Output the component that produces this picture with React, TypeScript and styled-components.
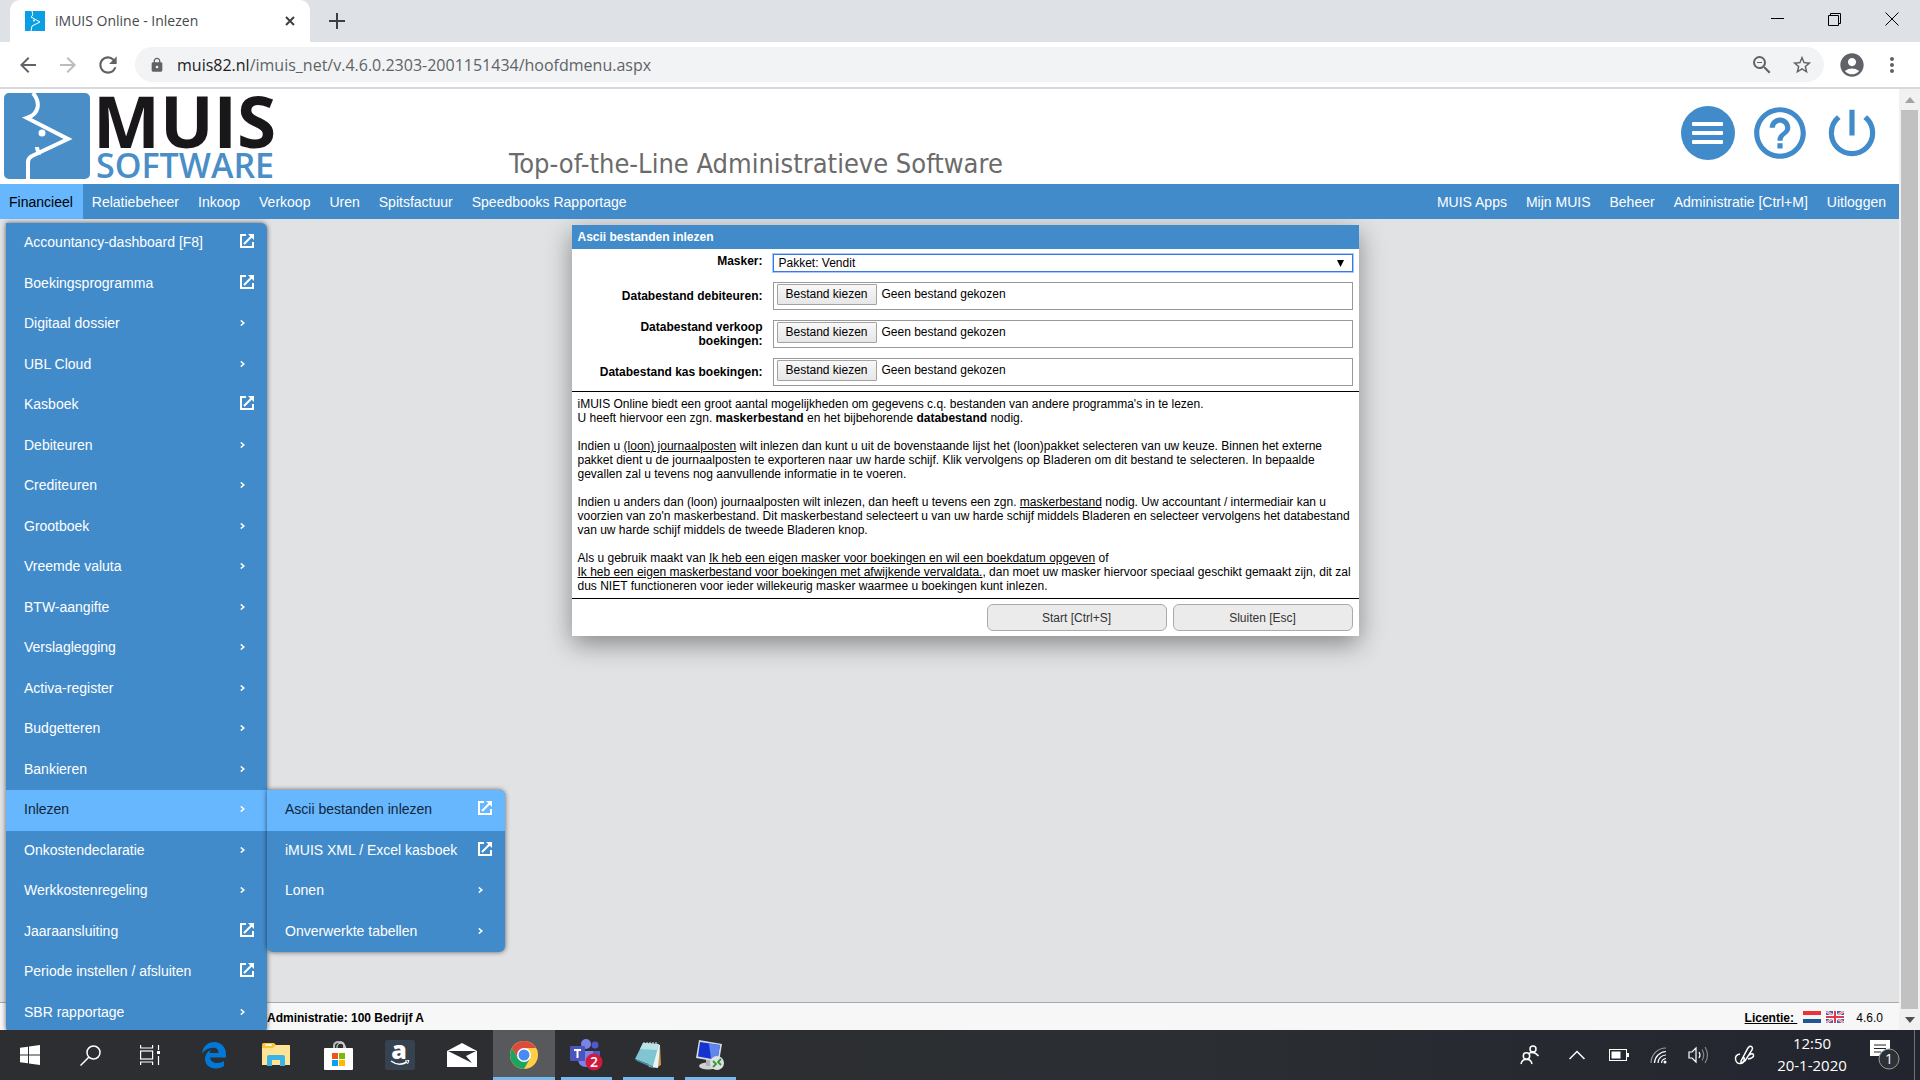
import React, { useRef, useState } from "react";
import styled, { createGlobalStyle, css } from "styled-components";
import {
  MdAccountCircle,
  MdArrowBack,
  MdArrowForward,
  MdHelpOutline,
  MdLock,
  MdMoreVert,
  MdPowerSettingsNew,
  MdRefresh,
  MdStarBorder,
  MdZoomOut,
} from "react-icons/md";

const blue = "#428bca";
const lightBlue = "#67b7ff";
const grey = "#5f6368";
const arial = `"Liberation Sans", Arial, sans-serif`;
const segoe = `"Open Sans", "Segoe UI", sans-serif`;

const Global = createGlobalStyle`
  *, *::before, *::after { box-sizing: border-box; }
  body { margin: 0; font: 12px/14px ${arial}; color: #000; overflow: hidden; }
  button, input, select { font: inherit; color: inherit; }
  a { color: inherit; text-decoration: none; }
  ul { list-style: none; margin: 0; padding: 0; }
  p { margin: 0; }
  svg { display: block; flex: none; }
`;

const Screen = styled.div`
  display: flex;
  flex-direction: column;
  height: 100vh;
  overflow: hidden;
`;

const PlainButton = styled.button`
  display: flex;
  align-items: center;
  justify-content: center;
  padding: 0;
  border: 0;
  background: none;
  cursor: pointer;
`;

/* ---------- browser window ---------- */

const TabStrip = styled.div`
  display: flex;
  flex: none;
  height: 42px;
  padding-left: 10px;
  background: #dee1e6;
`;

const Tab = styled.div`
  display: flex;
  align-items: center;
  width: 300px;
  padding: 0 14px 0 15px;
  border-radius: 10px 10px 0 0;
  background: #fff;
  color: #45494d;
  font: 14px/20px ${segoe};
`;

const TabTitle = styled.span`
  flex: 1;
  margin-left: 10px;
`;

const NewTab = styled(PlainButton)`
  width: 54px;
`;

const WindowButtons = styled.div`
  display: flex;
  margin-left: auto;
  button { width: 57px; height: 38px; }
`;

const Toolbar = styled.div`
  display: flex;
  flex: none;
  align-items: center;
  height: 47px;
  padding: 0 8px;
  border-bottom: 2px solid #d8d9de;
  background: #fff;
  color: ${grey};
`;

const ToolButton = styled(PlainButton)<{ $faded?: boolean }>`
  width: 40px;
  height: 34px;
  color: ${(p) => (p.$faded ? "#babcbe" : grey)};
`;

const Omnibox = styled.div`
  display: flex;
  flex: 1;
  align-items: center;
  height: 35px;
  margin: 0 8px 0 7px;
  padding: 0 2px 0 14px;
  border-radius: 18px;
  background: #f1f3f4;
  font: 16px/22px ${segoe};
`;

const Url = styled.span`
  flex: 1;
  margin-left: 12px;
  b { color: #202124; font-weight: 400; }
`;

const Viewport = styled.div`
  display: flex;
  flex: 1;
  min-height: 0;
  overflow: hidden;
`;

const ScrollBar = styled.div`
  display: flex;
  flex: none;
  flex-direction: column;
  width: 21px;
  background: #f1f1f1;
`;

const ScrollButton = styled(PlainButton)`
  height: 21px;
`;

const Thumb = styled.div`
  flex: 1;
  margin: 0 2px;
  background: #c1c1c1;
`;

/* ---------- application ---------- */

const Page = styled.div`
  display: flex;
  flex: 1;
  flex-direction: column;
  min-width: 0;
  background: #e1e2e4;
`;

const Header = styled.header`
  display: flex;
  flex: none;
  height: 95px;
  padding: 4px 16px 0 4px;
  background: #fff;
`;

const Wordmark = styled.div`
  display: flex;
  flex-direction: column;
  width: 187px;
  padding-left: 3px;
  font-family: ${segoe};
`;

const WordTop = styled.span`
  color: #1a171b;
  font-size: 71px;
  font-weight: 700;
  line-height: 56px;
`;

const WordBottom = styled.span`
  padding-left: 3px;
  color: #4a8ec8;
  font-size: 34px;
  font-weight: 600;
  line-height: 32px;
`;

const Slogan = styled.h1`
  align-self: flex-end;
  margin: 0 0 4px 232px;
  color: #6b6b6b;
  font: 400 27px/32px "DejaVu Sans Condensed", "Noto Sans", sans-serif;
`;

const HeaderButtons = styled.div`
  display: flex;
  gap: 10px;
  height: 80px;
  margin-left: auto;
  color: ${blue};
  button { width: 62px; color: inherit; }
`;

const NavBar = styled.nav`
  position: relative;
  z-index: 2;
  display: flex;
  flex: none;
  justify-content: space-between;
  padding-right: 3px;
  background: ${blue};
  color: #fff;
  font-size: 14px;
`;

const NavList = styled.ul`
  display: flex;
`;

const NavLink = styled.a<{ $active?: boolean }>`
  display: block;
  padding: 2px 10px 0 9px;
  line-height: 33px;
  ${(p) => p.$active && css`background: ${lightBlue}; color: #000;`}
`;

const Menu = styled.ul<{ $sub?: boolean }>`
  position: absolute;
  top: ${(p) => (p.$sub ? "0" : "39px")};
  left: ${(p) => (p.$sub ? "100%" : "6px")};
  display: grid;
  grid-auto-rows: 41px 40px;
  width: ${(p) => (p.$sub ? "238px" : "261px")};
  border-radius: 0 6px 6px 6px;
  background: ${blue};
  box-shadow: 0 0 5px rgba(0, 0, 0, 0.6);
`;

const MenuItem = styled.li`
  position: relative;
  display: grid;
  &:first-child > a { border-top-right-radius: 6px; }
`;

const MenuLink = styled.a<{ $active?: boolean }>`
  display: flex;
  align-items: center;
  justify-content: space-between;
  padding: 0 11px 3px 18px;
  color: #fff;
  ${(p) => p.$active && css`background: ${lightBlue}; color: #10263a;`}
`;

const MenuMark = styled.span<{ $raised?: boolean }>`
  display: flex;
  width: 16px;
  padding-bottom: ${(p) => (p.$raised ? "2px" : "0")};
  color: #fff;
`;

const Workspace = styled.main`
  display: flex;
  flex: 1;
  align-items: flex-start;
  justify-content: center;
  min-height: 0;
  padding: 6px 0 0 31px;
`;

const Dialog = styled.form`
  width: 787px;
  background: #fff;
  box-shadow: 0 8px 24px rgba(0, 0, 0, 0.4);
`;

const DialogTitle = styled.h2`
  margin: 0;
  padding: 0 6px;
  background: ${blue};
  color: #fff;
  font-size: 12px;
  line-height: 24px;
`;

const Fields = styled.div`
  display: grid;
  gap: 10px;
  padding: 5px 6px;
  border-bottom: 1px solid #000;
`;

const FieldRow = styled.div<{ $top?: boolean }>`
  display: grid;
  grid-template-columns: 185px 1fr;
  column-gap: 10px;
  align-items: ${(p) => (p.$top ? "start" : "center")};
`;

const FieldLabel = styled.label`
  font-weight: 700;
  text-align: right;
`;

const SelectWrap = styled.div`
  position: relative;
  svg { position: absolute; top: 6px; right: 9px; pointer-events: none; }
`;

const Select = styled.select`
  display: block;
  width: 100%;
  height: 18px;
  padding: 0 5px;
  border: 1px solid #3b78e7;
  border-radius: 0;
  outline: 1px solid #a9c9fb;
  background: #fff;
  appearance: none;
`;

const FileBox = styled.div`
  display: flex;
  align-items: flex-start;
  gap: 5px;
  height: 28px;
  padding: 1px 3px;
  border: 1px solid #999;
  line-height: 21px;
`;

const HiddenFile = styled.input`
  display: none;
`;

const PickButton = styled.button`
  height: 21px;
  width: 100px;
  padding: 0 0 1px;
  border: 1px solid #a3a3a3;
  border-radius: 1px;
  background: linear-gradient(#f8f8f8, #e6e6e6);
  line-height: 18px;
`;

const Info = styled.div`
  display: grid;
  gap: 14px;
  padding: 5px 6px;
  border-bottom: 1px solid #000;
  a { text-decoration: underline; }
`;

const Actions = styled.div`
  display: flex;
  justify-content: flex-end;
  gap: 6px;
  padding: 5px 6px;
`;

const ActionButton = styled.button`
  width: 180px;
  height: 27px;
  padding: 0;
  border: 1px solid #aaa;
  border-radius: 6px;
  background: #ebebeb;
  color: #333;
`;

const Footer = styled.footer`
  display: flex;
  flex: none;
  align-items: center;
  height: 28px;
  padding: 2px 16px 0 267px;
  border-top: 1px solid #aaa;
  background: #f7f7f7;
`;

const License = styled.a`
  margin: 0 6px 0 auto;
  font-weight: 700;
  text-decoration: underline;
  white-space: pre;
`;

const Flags = styled.span`
  display: flex;
  gap: 5px;
  margin: 0 12px 2px 0;
`;

/* ---------- taskbar ---------- */

const TaskBar = styled.div`
  display: flex;
  flex: none;
  height: 50px;
  padding-right: 5px;
  background: linear-gradient(90deg, #2d2e31, #2b2e32 60%, #22252e);
  color: #fff;
  font: 15px/22px ${segoe};
`;

const StartGroup = styled.div`
  display: flex;
  padding-right: 3px;
`;

const TaskButton = styled(PlainButton)<{ $narrow?: boolean; $open?: boolean; $active?: boolean }>`
  width: ${(p) => (p.$narrow ? "60px" : "62px")};
  border-bottom: 3px solid transparent;
  padding-top: 3px;
  ${(p) => p.$open && css`
    background: linear-gradient(#76b9ed, #76b9ed) center bottom / 51px 3px no-repeat border-box;
  `}
  ${(p) => p.$active && css`
    background: #58595c;
    border-color: #76b9ed;
  `}
`;

const Tray = styled.div`
  display: flex;
  align-items: center;
  margin-left: auto;
`;

const TrayButton = styled(PlainButton)<{ $size?: "medium" | "large" }>`
  width: ${(p) => (p.$size === "large" ? "50px" : p.$size === "medium" ? "44px" : "40px")};
  height: 50px;
`;

const Clock = styled.time`
  width: 86px;
  padding-bottom: 2px;
  text-align: center;
`;

const Notice = styled(PlainButton)`
  width: 60px;
  height: 50px;
  border-right: 1px solid #6d6f74;
`;

/* ---------- drawings ---------- */

const MouseLogo = () => (
  <svg width="86" height="86" viewBox="0 0 86 86">
    <rect width="86" height="86" rx="5" fill="#4a8ec8" />
    <path d="M29 0C37 10 35 21 23 25L64 46L28 63Q24 65 24 69V86" fill="none" stroke="#fff" strokeWidth="4" />
    <circle cx="38" cy="40" r="3.500" fill="#fff" />
    <path d="M33 54C33 57 34 59 37 60" stroke="#fff" strokeWidth="4" fill="none" />
  </svg>
);

const Favicon = () => (
  <svg width="20" height="20" viewBox="0 0 20 20">
    <rect width="20" height="20" fill="#0a9fe5" />
    <path d="M7 0C8 3 8 5 6 6L15 11L7 15L6 20" fill="none" stroke="#fff" />
    <circle cx="9" cy="9.500" r="1" fill="#fff" />
  </svg>
);

const Line = ({ d, size = 24, width = 1.5, color = "#fff" }: { d: string; size?: number; width?: number; color?: string }) => (
  <svg width={size} height={size} viewBox={`0 0 ${size} ${size}`} fill="none" stroke={color} strokeWidth={width}>
    <path d={d} />
  </svg>
);

const Chevron = () => (
  <svg width="5" height="6" viewBox="0 0 5 6" fill="none" stroke="#fff" strokeWidth="1.600">
    <path d="M0.800 0.500L3.800 3L0.800 5.500" />
  </svg>
);

const OpenIcon = () => (
  <svg width="14" height="14" viewBox="0 0 14 14" fill="none" stroke="#fff" strokeWidth="2">
    <path d="M6 1H1V13H13V8M4 10L12 2" />
    <path d="M8 0H14V6L12 4L10 2Z" fill="#fff" stroke="none" />
  </svg>
);

const Triangle = ({ d, fill }: { d: string; fill: string }) => (
  <svg width="10" height="6" viewBox="0 0 10 6"><path d={d} fill={fill} /></svg>
);

const Hamburger = () => (
  <svg width="54" height="54" viewBox="0 0 54 54">
    <circle cx="27" cy="27" r="27" fill={blue} />
    <g fill="#fff">
      <rect x="11" y="16" width="31" height="4" rx="1" />
      <rect x="11" y="25" width="31" height="4" rx="1" />
      <rect x="11" y="34" width="31" height="4" rx="1" />
    </g>
  </svg>
);

const DutchFlag = () => (
  <svg width="18" height="12" viewBox="0 0 18 12">
    <rect width="18" height="4" fill="#e8323c" />
    <rect y="4" width="18" height="4" fill="#f4f4f4" />
    <rect y="8" width="18" height="4" fill="#1f5596" />
  </svg>
);

const BritishFlag = () => (
  <svg width="18" height="12" viewBox="0 0 18 12">
    <rect width="18" height="12" fill="#4a5fae" />
    <path d="M0 0L18 12M18 0L0 12" stroke="#f3dfe4" strokeWidth="2.500" />
    <path d="M0 0L18 12M18 0L0 12" stroke="#e2505c" strokeWidth="0.800" />
    <path d="M9 0V12M0 6H18" stroke="#fff" strokeWidth="4" />
    <path d="M9 0V12M0 6H18" stroke="#e03a48" strokeWidth="2" />
  </svg>
);

const WindowsIcon = () => (
  <svg width="20" height="20" viewBox="0 0 20 20" fill="#fff">
    <path d="M0 2.800L8 1.700V9.500H0ZM9 1.500L20 0V9.500H9ZM0 10.500H8V18.300L0 17.200ZM9 10.500H20V20L9 18.500Z" />
  </svg>
);

const EdgeIcon = () => (
  <svg width="26" height="28" viewBox="0 0 26 28">
    <path fill="#0078d7" d="M1 12.500C2 5 7 1 13 1C20 1 25 6 25 13V16.500H9C9.500 20.500 13 22 16 22C19 22 21.500 21 23 20V25C21 26.500 18 27.500 15 27.500C8 27.500 4 23 4 18C4 14 6.500 10.500 10 8.800C9 10 8.800 11.200 8.700 12H17.500C17.500 8.500 15.500 6.800 12 6.800C7.500 6.800 4 9 1 12.500Z" />
  </svg>
);

const FolderIcon = () => (
  <svg width="28" height="24" viewBox="0 0 28 24">
    <path d="M0 1.500Q0 0 1.500 0H12L14 2H27Q28 2 28 3V22H0Z" fill="#f9c33c" />
    <path d="M0 5H11L14 2H27Q28 2 28 3V22H0Z" fill="#ffe495" />
    <rect x="3" y="1" width="7" height="2" rx="1" fill="#fff3c6" />
    <path d="M5 23V14Q5 12 7 12H21Q23 12 23 14V23H18V17H10V23Z" fill="#3cb4e6" />
  </svg>
);

const StoreIcon = () => (
  <svg width="29" height="30" viewBox="0 0 29 30">
    <path d="M10 9V6Q10 2 15 2Q20 2 20 6V9" fill="none" stroke="#b9bbbd" strokeWidth="2" />
    <path d="M13 9V6Q14 3 17 3Q21 3 22 9" fill="none" stroke="#e6e6e6" />
    <rect y="8" width="29" height="22" rx="1" fill="#fff" />
    <rect x="8" y="13" width="6" height="6" fill="#f25022" />
    <rect x="15" y="13" width="6" height="6" fill="#7fba00" />
    <rect x="8" y="20" width="6" height="6" fill="#00a4ef" />
    <rect x="15" y="20" width="6" height="6" fill="#ffb900" />
  </svg>
);

const AmazonIcon = () => (
  <svg width="30" height="30" viewBox="0 0 30 30">
    <rect width="30" height="30" rx="2" fill="#36424f" />
    <text x="14" y="19" textAnchor="middle" fontFamily="Open Sans" fontWeight="800" fontSize="25" fill="#fff">a</text>
    <path d="M6 21Q14 27 22 22" fill="none" stroke="#fff" strokeWidth="1.500" />
    <path d="M20 21L24 20.500L22.500 24" fill="none" stroke="#fff" />
  </svg>
);

const MailIcon = () => (
  <svg width="30" height="24" viewBox="0 0 30 24">
    <path d="M0 8L15 0L30 8V24H0Z" fill="#fff" />
    <path d="M1 8H29L19 13L25 20L1 8Z" fill="#2d2e31" />
  </svg>
);

const ChromeIcon = () => (
  <svg width="28" height="28" viewBox="0 0 28 28">
    <circle cx="14" cy="14" r="14" fill="#ffce44" />
    <path d="M1.900 7A14 14 0 0 1 26.100 7H14L8 17.500Z" fill="#dd4b3e" />
    <path d="M1.900 7A14 14 0 0 0 14 28L20 17.500H8Z" fill="#1da462" />
    <circle cx="14" cy="14" r="7" fill="#fff" />
    <circle cx="14" cy="14" r="5.500" fill="#4a8af4" />
  </svg>
);

const TeamsIcon = () => (
  <svg width="34" height="32" viewBox="0 0 34 32">
    <circle cx="17" cy="5" r="5" fill="#7b83eb" />
    <circle cx="26" cy="6" r="3.500" fill="#5059c9" />
    <path d="M20 12H31V20Q31 25 26 25H20Z" fill="#5059c9" />
    <path d="M9 12H24V21Q24 28 17 28Q10 28 9 21Z" fill="#7b83eb" />
    <rect x="1" y="7" width="15" height="15" rx="1" fill="#4b53bc" />
    <path d="M5 11H12M8.500 11V19" stroke="#fff" strokeWidth="2" />
    <circle cx="25" cy="23" r="8.500" fill="#d01b3f" />
    <text x="25" y="28" textAnchor="middle" fontFamily="Open Sans" fontWeight="600" fontSize="14" fill="#fff">2</text>
  </svg>
);

const NotepadIcon = () => (
  <svg width="28" height="28" viewBox="0 0 28 28">
    <path d="M26 4L27 24L22 27Z" fill="#c99b4a" />
    <path d="M9 2L26 4L24 27L15 26Z" fill="#e8f4f6" />
    <path d="M9 2L25 3L19 25L1 18Z" fill="#7fc6d2" />
    <path d="M9 2L25 3L23 9L6 8Z" fill="#b9e3e8" />
    <path d="M1 18L19 25L19 27L3 20Z" fill="#4a8f9d" />
    <path d="M10 1V3M13 1V3M16 1V3M19 1V3M22 1V4" stroke="#ddd" />
  </svg>
);

const RemoteIcon = () => (
  <svg width="30" height="30" viewBox="0 0 30 30">
    <ellipse cx="13" cy="26" rx="9" ry="3.500" fill="#cfd2d4" />
    <path d="M11 18H17V26H11Z" fill="#aeb2b5" />
    <path d="M4 0L27 4L24 22L1 18Z" fill="#d8dadc" />
    <path d="M5 2L25 5L22.500 20L3 16.500Z" fill="#1533cf" />
    <path d="M14 3.500L25 5L22.500 20L16 19Z" fill="#5f86ea" />
    <circle cx="22" cy="23" r="7" fill="#dfe1e0" />
    <path d="M18 21L21 24L18 27M26 19L23 22L26 25" fill="none" stroke="#2e9a34" strokeWidth="1.800" />
  </svg>
);

const BatteryIcon = () => (
  <svg width="20" height="12" viewBox="0 0 20 12" fill="none" stroke="#fff">
    <rect x="0.500" y="0.500" width="17" height="11" />
    <path d="M19 4V8" strokeWidth="2" />
    <rect x="3" y="3" width="8" height="6" fill="#fff" />
  </svg>
);

const WifiIcon = () => (
  <svg width="18" height="18" viewBox="0 0 18 18" fill="none" stroke="#fff" strokeWidth="1.200">
    <path d="M1 17A15 15 0 0 1 16 2" stroke="#999ba0" />
    <path d="M4.500 17A12 12 0 0 1 16 5.500M8 17A8 8 0 0 1 16 9M11.500 17A5 5 0 0 1 16 12.500" />
    <circle cx="15" cy="16" r="1.500" fill="#fff" stroke="none" />
  </svg>
);

const SoundIcon = () => (
  <svg width="22" height="20" viewBox="0 0 22 20" fill="none" stroke="#fff" strokeWidth="1.200">
    <path d="M1 7H4L8 3V17L4 13H1Z" />
    <path d="M11 7Q13 10 11 13" />
    <path d="M14 4.500Q17.500 10 14 15.500M17 2Q22 10 17 18" stroke="#85878c" />
  </svg>
);

const NoticeIcon = () => (
  <svg width="32" height="32" viewBox="0 0 32 32">
    <path d="M1 1H21V17H14L11 20V17H1Z" fill="#fff" />
    <path d="M5 6H17M5 9.500H17M5 13H12" stroke="#22252e" />
    <circle cx="20" cy="20" r="10" fill="#2e3136" stroke="#999" />
    <text x="20" y="25" textAnchor="middle" fontFamily="Open Sans" fontSize="14" fill="#fff">1</text>
  </svg>
);

/* ---------- data ---------- */

type Entry = { label: string; opens?: boolean; active?: boolean; children?: Entry[] };

const submenu: Entry[] = [
  { label: "Ascii bestanden inlezen", opens: true, active: true },
  { label: "iMUIS XML / Excel kasboek", opens: true },
  { label: "Lonen" },
  { label: "Onverwerkte tabellen" },
];

const menu: Entry[] = [
  { label: "Accountancy-dashboard [F8]", opens: true },
  { label: "Boekingsprogramma", opens: true },
  { label: "Digitaal dossier" },
  { label: "UBL Cloud" },
  { label: "Kasboek", opens: true },
  { label: "Debiteuren" },
  { label: "Crediteuren" },
  { label: "Grootboek" },
  { label: "Vreemde valuta" },
  { label: "BTW-aangifte" },
  { label: "Verslaglegging" },
  { label: "Activa-register" },
  { label: "Budgetteren" },
  { label: "Bankieren" },
  { label: "Inlezen", active: true, children: submenu },
  { label: "Onkostendeclaratie" },
  { label: "Werkkostenregeling" },
  { label: "Jaaraansluiting", opens: true },
  { label: "Periode instellen / afsluiten", opens: true },
  { label: "SBR rapportage" },
];

const leftNav = ["Relatiebeheer", "Inkoop", "Verkoop", "Uren", "Spitsfactuur", "Speedbooks Rapportage"];
const rightNav = ["MUIS Apps", "Mijn MUIS", "Beheer", "Administratie [Ctrl+M]", "Uitloggen"];

const MenuTree = ({ items, sub }: { items: Entry[]; sub?: boolean }) => (
  <Menu $sub={sub}>
    {items.map((item) => (
      <MenuItem key={item.label}>
        <MenuLink href="#" $active={item.active}>
          {item.label}
          <MenuMark $raised={item.opens}>{item.opens ? <OpenIcon /> : <Chevron />}</MenuMark>
        </MenuLink>
        {item.children && <MenuTree items={item.children} sub />}
      </MenuItem>
    ))}
  </Menu>
);

const FileField = ({ id, label }: { id: string; label: string }) => {
  const input = useRef<HTMLInputElement>(null);
  const [name, setName] = useState("Geen bestand gekozen");
  return (
    <FieldRow>
      <FieldLabel htmlFor={id}>{label}</FieldLabel>
      <FileBox>
        <HiddenFile
          ref={input}
          id={id}
          type="file"
          onChange={(e) => setName(e.target.files?.[0]?.name ?? "Geen bestand gekozen")}
        />
        <PickButton type="button" onClick={() => input.current?.click()}>Bestand kiezen</PickButton>
        <span>{name}</span>
      </FileBox>
    </FieldRow>
  );
};

export default function App() {
  return (
    <Screen>
      <Global />
      <TabStrip>
        <Tab>
          <Favicon />
          <TabTitle>iMUIS Online - Inlezen</TabTitle>
          <PlainButton aria-label="Tabblad sluiten"><Line d="M2 2L10 10M10 2L2 10" size={12} width={2} color="#3c4043" /></PlainButton>
        </Tab>
        <NewTab aria-label="Nieuw tabblad"><Line d="M8 0V16M0 8H16" size={16} width={2} color="#3c4043" /></NewTab>
        <WindowButtons>
          <PlainButton aria-label="Minimaliseren"><Line d="M0 6.500H13" size={14} width={1} color="#000" /></PlainButton>
          <PlainButton aria-label="Herstellen"><Line d="M0.500 3.500H10.500V13.500H0.500ZM2.500 3.500V1.500H12.500V11.500H10.500" size={14} width={1} color="#000" /></PlainButton>
          <PlainButton aria-label="Sluiten"><Line d="M0.500 0.500L13.500 13.500M13.500 0.500L0.500 13.500" size={14} width={1} color="#000" /></PlainButton>
        </WindowButtons>
      </TabStrip>
      <Toolbar>
        <ToolButton aria-label="Terug"><MdArrowBack size={24} /></ToolButton>
        <ToolButton aria-label="Vooruit" $faded><MdArrowForward size={24} /></ToolButton>
        <ToolButton aria-label="Vernieuwen"><MdRefresh size={26} /></ToolButton>
        <Omnibox>
          <MdLock size={16} />
          <Url><b>muis82.nl</b>/imuis_net/v.4.6.0.2303-2001151434/hoofdmenu.aspx</Url>
          <ToolButton aria-label="Zoomen"><MdZoomOut size={24} /></ToolButton>
          <ToolButton aria-label="Bladwijzer"><MdStarBorder size={22} /></ToolButton>
        </Omnibox>
        <ToolButton aria-label="Profiel"><MdAccountCircle size={28} /></ToolButton>
        <ToolButton aria-label="Menu"><MdMoreVert size={24} /></ToolButton>
      </Toolbar>

      <Viewport>
        <Page>
          <Header>
            <MouseLogo />
            <Wordmark>
              <WordTop>MUIS</WordTop>
              <WordBottom>SOFTWARE</WordBottom>
            </Wordmark>
            <Slogan>Top-of-the-Line Administratieve Software</Slogan>
            <HeaderButtons>
              <PlainButton aria-label="Menu"><Hamburger /></PlainButton>
              <PlainButton aria-label="Help"><MdHelpOutline size={62} /></PlainButton>
              <PlainButton aria-label="Uitloggen"><MdPowerSettingsNew size={62} /></PlainButton>
            </HeaderButtons>
          </Header>

          <NavBar>
            <NavList>
              <li>
                <NavLink href="#" $active>Financieel</NavLink>
                <MenuTree items={menu} />
              </li>
              {leftNav.map((label) => <li key={label}><NavLink href="#">{label}</NavLink></li>)}
            </NavList>
            <NavList>
              {rightNav.map((label) => <li key={label}><NavLink href="#">{label}</NavLink></li>)}
            </NavList>
          </NavBar>

          <Workspace>
            <Dialog onSubmit={(e) => e.preventDefault()}>
              <DialogTitle>Ascii bestanden inlezen</DialogTitle>
              <Fields>
                <FieldRow $top>
                  <FieldLabel htmlFor="masker">Masker:</FieldLabel>
                  <SelectWrap>
                    <Select id="masker"><option>Pakket: Vendit</option></Select>
                    <svg width="7" height="7" viewBox="0 0 7 7"><path d="M0 0H7L3.500 7Z" /></svg>
                  </SelectWrap>
                </FieldRow>
                <FileField id="debiteuren" label="Databestand debiteuren:" />
                <FileField id="verkoop" label="Databestand verkoop boekingen:" />
                <FileField id="kas" label="Databestand kas boekingen:" />
              </Fields>
              <Info>
                <p>
                  iMUIS Online biedt een groot aantal mogelijkheden om gegevens c.q. bestanden van andere programma's in te lezen.<br />
                  U heeft hiervoor een zgn. <b>maskerbestand</b> en het bijbehorende <b>databestand</b> nodig.
                </p>
                <p>
                  Indien u <a href="#">(loon) journaalposten</a> wilt inlezen dan kunt u uit de bovenstaande lijst het (loon)pakket selecteren van uw keuze. Binnen het externe pakket dient u de journaalposten te exporteren naar uw harde schijf. Klik vervolgens op Bladeren om dit bestand te selecteren. In bepaalde gevallen zal u tevens nog aanvullende informatie in te voeren.
                </p>
                <p>
                  Indien u anders dan (loon) journaalposten wilt inlezen, dan heeft u tevens een zgn. <a href="#">maskerbestand</a> nodig. Uw accountant / intermediair kan u voorzien van zo'n maskerbestand. Dit maskerbestand selecteert u van uw harde schijf middels Bladeren en selecteer vervolgens het databestand van uw harde schijf middels de tweede Bladeren knop.
                </p>
                <p>
                  Als u gebruik maakt van <a href="#">Ik heb een eigen masker voor boekingen en wil een boekdatum opgeven</a> of<br />
                  <a href="#">Ik heb een eigen maskerbestand voor boekingen met afwijkende vervaldata.</a>, dan moet uw masker hiervoor speciaal geschikt gemaakt zijn, dit zal dus NIET functioneren voor ieder willekeurig masker waarmee u boekingen kunt inlezen.
                </p>
              </Info>
              <Actions>
                <ActionButton type="submit">Start [Ctrl+S]</ActionButton>
                <ActionButton type="button">Sluiten [Esc]</ActionButton>
              </Actions>
            </Dialog>
          </Workspace>

          <Footer>
            <b>Administratie: 100 Bedrijf A</b>
            <License href="#">{"Licentie: "}</License>
            <Flags><DutchFlag /><BritishFlag /></Flags>
            <span>4.6.0</span>
          </Footer>
        </Page>
        <ScrollBar>
          <ScrollButton aria-label="Omhoog"><Triangle d="M0 6L5 0L10 6Z" fill="#a3a3a3" /></ScrollButton>
          <Thumb />
          <ScrollButton aria-label="Omlaag"><Triangle d="M0 0L5 6L10 0Z" fill="#505050" /></ScrollButton>
        </ScrollBar>
      </Viewport>

      <TaskBar>
        <StartGroup>
          <TaskButton $narrow aria-label="Start"><WindowsIcon /></TaskButton>
          <TaskButton $narrow aria-label="Zoeken">
            <svg width="21" height="21" viewBox="0 0 21 21" fill="none" stroke="#fff" strokeWidth="1.500">
              <circle cx="13.500" cy="7.500" r="6.500" /><path d="M9 12L0.500 20.500" />
            </svg>
          </TaskButton>
          <TaskButton $narrow aria-label="Taakweergave">
            <svg width="20" height="20" viewBox="0 0 20 20" fill="none" stroke="#fff" strokeWidth="1.200">
              <rect x="0.600" y="6" width="12" height="8" />
              <path d="M0.600 0V3H12.600V0M0.600 20V17H12.600V20M18.500 0V5M18.500 11V20" />
              <rect x="17" y="6" width="3" height="3" fill="#fff" stroke="none" />
            </svg>
          </TaskButton>
        </StartGroup>
        <TaskButton aria-label="Edge"><EdgeIcon /></TaskButton>
        <TaskButton aria-label="Verkenner"><FolderIcon /></TaskButton>
        <TaskButton aria-label="Store"><StoreIcon /></TaskButton>
        <TaskButton aria-label="Amazon"><AmazonIcon /></TaskButton>
        <TaskButton aria-label="Mail"><MailIcon /></TaskButton>
        <TaskButton $active aria-label="Chrome"><ChromeIcon /></TaskButton>
        <TaskButton $open aria-label="Teams"><TeamsIcon /></TaskButton>
        <TaskButton $open aria-label="Kladblok"><NotepadIcon /></TaskButton>
        <TaskButton $open aria-label="Extern bureaublad"><RemoteIcon /></TaskButton>
        <Tray>
          <TrayButton $size="large" aria-label="Personen">
            <svg width="20" height="20" viewBox="0 0 20 20" fill="none" stroke="#fff" strokeWidth="1.500">
              <circle cx="13" cy="4" r="3" /><path d="M8.500 9Q13 5 18.500 11" />
              <circle cx="6.500" cy="11" r="3.200" /><path d="M1 19Q2 14 6.500 14.500Q11 14 12 19" />
            </svg>
          </TrayButton>
          <TrayButton $size="medium" aria-label="Verborgen pictogrammen"><Line d="M0.500 12L8 4.500L15.500 12" size={16} /></TrayButton>
          <TrayButton aria-label="Batterij"><BatteryIcon /></TrayButton>
          <TrayButton aria-label="Netwerk"><WifiIcon /></TrayButton>
          <TrayButton aria-label="Geluid"><SoundIcon /></TrayButton>
          <TrayButton $size="large" aria-label="Pen">
            <Line d="M7 16L14 3Q16 0 18 2Q19 3 18 5L11 16L7 18ZM6 9Q1 10 1.500 14Q2 19 7 18.500Q11 18 10 12M15 10Q20 7 19.500 11Q19 13 14 14" size={21} width={1.5} />
          </TrayButton>
          <Clock>12:50<br />20-1-2020</Clock>
          <Notice aria-label="Meldingen"><NoticeIcon /></Notice>
        </Tray>
      </TaskBar>
    </Screen>
  );
}
